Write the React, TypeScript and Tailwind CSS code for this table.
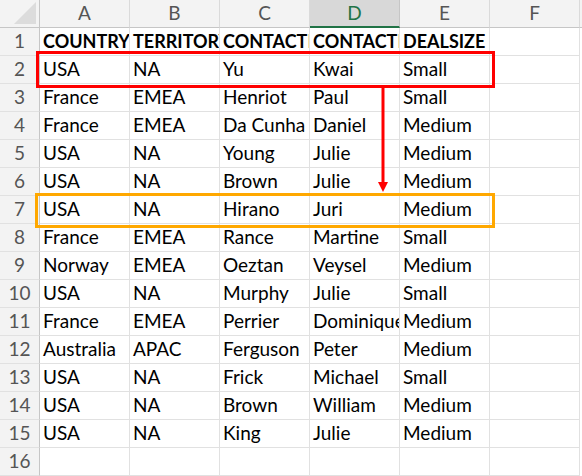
import React from "react";

const cols = ["A", "B", "C", "D", "E", "F"];
const header = ["COUNTRY", "TERRITORY", "CONTACTLASTNAME", "CONTACTFIRSTNAME", "DEALSIZE", ""];
const data: string[][] = [
  ["USA", "NA", "Yu", "Kwai", "Small"],
  ["France", "EMEA", "Henriot", "Paul", "Small"],
  ["France", "EMEA", "Da Cunha", "Daniel", "Medium"],
  ["USA", "NA", "Young", "Julie", "Medium"],
  ["USA", "NA", "Brown", "Julie", "Medium"],
  ["USA", "NA", "Hirano", "Juri", "Medium"],
  ["France", "EMEA", "Rance", "Martine", "Small"],
  ["Norway", "EMEA", "Oeztan", "Veysel", "Medium"],
  ["USA", "NA", "Murphy", "Julie", "Small"],
  ["France", "EMEA", "Perrier", "Dominique", "Medium"],
  ["Australia", "APAC", "Ferguson", "Peter", "Medium"],
  ["USA", "NA", "Frick", "Michael", "Small"],
  ["USA", "NA", "Brown", "William", "Medium"],
  ["USA", "NA", "King", "Julie", "Medium"],
];

const font = { fontFamily: "Lato, 'Open Sans', sans-serif" };

function Cell({ text, bold }: { text: string; bold?: boolean }) {
  return (
    <div
      className={`w-[90px] h-[28px] shrink-0 border-r border-b border-[#e1e1e1] overflow-hidden whitespace-nowrap pl-[3px] flex items-end pb-[3px] leading-[22px] text-black ${
        bold ? "font-bold text-[18px]" : "text-[19px]"
      }`}
    >
      {text}
    </div>
  );
}

function RowHead({ n }: { n: number }) {
  return (
    <div className="w-[40px] h-[28px] shrink-0 bg-[#f3f3f3] border-r border-b border-r-[#c6c6c6] border-b-[#e1e1e1] flex items-center justify-center text-[19px] text-[#555]">
      {n}
    </div>
  );
}

export default function App() {
  const rows: string[][] = [header, ...data.map((r) => [...r, ""]), ["", "", "", "", "", ""]];
  return (
    <div className="relative w-[582px] h-[476px] bg-white overflow-hidden" style={font}>
      <div className="flex">
        <div className="w-[40px] h-[28px] shrink-0 bg-[#f3f3f3] border-r border-b border-[#c6c6c6] relative">
          <svg className="absolute right-[3px] bottom-[3px]" width="22" height="22" viewBox="0 0 22 22">
            <polygon points="22,0 22,22 0,22" fill="#dcdcdc" />
          </svg>
        </div>
        {cols.map((c) => (
          <div
            key={c}
            className={`w-[90px] h-[28px] shrink-0 border-r flex items-center justify-center text-[19px] ${
              c === "D"
                ? "bg-[#d8d8d8] text-[#217346] border-r-[#c6c6c6] border-b-2 border-b-[#217346]"
                : "bg-[#f3f3f3] text-[#555] border-r-[#dadada] border-b border-b-[#c6c6c6]"
            }`}
          >
            {c}
          </div>
        ))}
        <div className="flex-1 h-[28px] bg-[#f3f3f3] border-b border-[#c6c6c6]" />
      </div>
      {rows.map((r, i) => (
        <div key={i} className="flex">
          <RowHead n={i + 1} />
          {r.map((t, j) => (
            <Cell key={j} text={t} bold={i === 0} />
          ))}
        </div>
      ))}

      <div className="absolute left-[36px] top-[51px] w-[459px] h-[37px] border-[3px] border-[#ff0000]" />
      <div className="absolute left-[35px] top-[193px] w-[460px] h-[35px] border-[3px] border-[#ffa800]" />
      <svg className="absolute left-[376px] top-[88px]" width="16" height="105" viewBox="0 0 16 105">
        <line x1="7" y1="0" x2="7" y2="95" stroke="#ff0000" strokeWidth="3" />
        <polygon points="2,94 12,94 7,104" fill="#ff0000" />
      </svg>
    </div>
  );
}
